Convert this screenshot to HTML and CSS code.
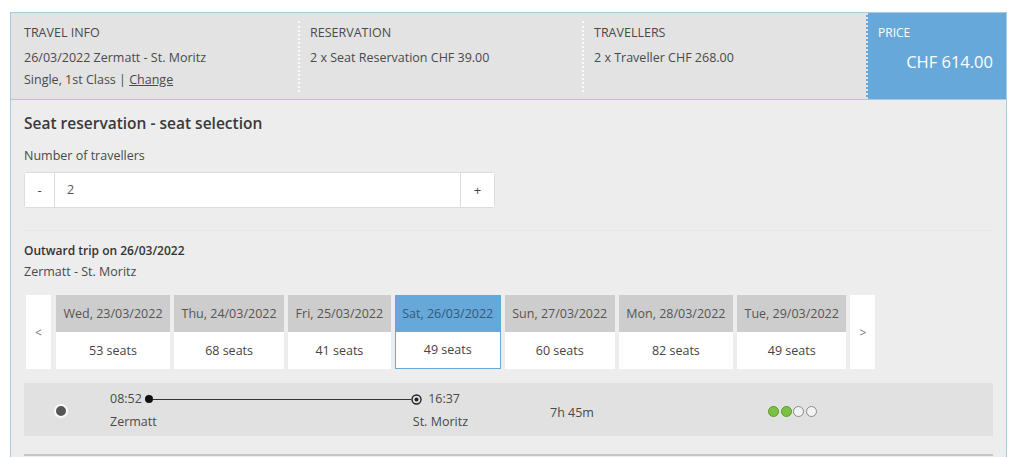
FILE: index.html
```html
<!DOCTYPE html>
<html>
  <head>
    <meta charset="UTF-8" />
    <meta name="viewport" content="width=device-width, initial-scale=1.0" />
    <title>Seat reservation</title>
    <link rel="stylesheet" href="styles.css">
  </head>

  <body>
    <div class="booking">
      <div class="summary">
        <div class="summary-col">
          <div class="summary-label">TRAVEL INFO</div>
          <div class="summary-line">26/03/2022 Zermatt - St. Moritz</div>
          <div class="summary-line">Single, 1st Class | <a href="#" class="change-link">Change</a></div>
        </div>
        <div class="summary-col dotted">
          <div class="summary-label">RESERVATION</div>
          <div class="summary-line">2 x Seat Reservation CHF 39.00</div>
        </div>
        <div class="summary-col dotted">
          <div class="summary-label">TRAVELLERS</div>
          <div class="summary-line">2 x Traveller CHF 268.00</div>
        </div>
        <div class="summary-col price">
          <div class="summary-label">PRICE</div>
          <div class="price-total">CHF 614.00</div>
        </div>
      </div>

      <div class="panel">
        <h2 class="panel-title">Seat reservation - seat selection</h2>
        <div class="field-label">Number of travellers</div>
        <div class="stepper">
          <button class="stepper-btn">-</button>
          <div class="stepper-value">2</div>
          <button class="stepper-btn plus">+</button>
        </div>

        <div class="trip">
          <div class="trip-title">Outward trip on 26/03/2022</div>
          <div class="trip-route">Zermatt - St. Moritz</div>

          <div class="dates">
            <button class="date-arrow">&lt;</button>
            <div class="date-card">
              <div class="date-head">Wed, 23/03/2022</div>
              <div class="date-seats">53 seats</div>
            </div>
            <div class="date-card">
              <div class="date-head">Thu, 24/03/2022</div>
              <div class="date-seats">68 seats</div>
            </div>
            <div class="date-card">
              <div class="date-head">Fri, 25/03/2022</div>
              <div class="date-seats">41 seats</div>
            </div>
            <div class="date-card selected">
              <div class="date-head">Sat, 26/03/2022</div>
              <div class="date-seats">49 seats</div>
            </div>
            <div class="date-card">
              <div class="date-head">Sun, 27/03/2022</div>
              <div class="date-seats">60 seats</div>
            </div>
            <div class="date-card">
              <div class="date-head">Mon, 28/03/2022</div>
              <div class="date-seats">82 seats</div>
            </div>
            <div class="date-card">
              <div class="date-head">Tue, 29/03/2022</div>
              <div class="date-seats">49 seats</div>
            </div>
            <button class="date-arrow">&gt;</button>
          </div>

          <div class="connection">
            <div class="radio-col"><span class="radio-dot"></span></div>
            <div class="route-col">
              <div class="route">
                <div class="route-top">
                  <span>08:52</span>
                  <span class="stop-dot"></span>
                  <span class="route-line"></span>
                  <svg class="stop-target" width="11" height="11" viewBox="0 0 11 11">
                    <circle cx="5.5" cy="5.5" r="4.5" fill="none" stroke="#222" stroke-width="1.4" />
                    <circle cx="5.5" cy="5.5" r="2" fill="#222" />
                  </svg>
                  <span>16:37</span>
                </div>
                <div class="route-bottom">
                  <span>Zermatt</span>
                  <span>St. Moritz</span>
                </div>
              </div>
            </div>
            <div class="duration-col">7h 45m</div>
            <div class="occupancy">
              <span class="occ full"></span>
              <span class="occ full"></span>
              <span class="occ"></span>
              <span class="occ"></span>
            </div>
          </div>

          <div class="connection-next"></div>
        </div>
      </div>
    </div>
  </body>
</html>
```

FILE: styles.css
```css
body {
  margin: 0;
  font-family: "Open Sans", "Liberation Sans", sans-serif;
  font-size: 12.5px;
  color: #4a4a4a;
  background-color: #fff;
}

.booking {
  width: 997px;
  margin: 12px 0 0 10px;
}

/* summary bar */
.summary {
  display: grid;
  grid-template-columns: 287px 284px 284px 1fr;
  height: 86px;
  background-color: #e3e3e3;
  border: 1px solid #a9c9de;
}

.summary-col {
  padding: 9px 12px 0 13px;
}

.summary-col.dotted {
  border-left: 2px dotted #fbfbfb;
  margin: 8px 0 7px;
  padding-top: 1px;
  padding-left: 10px;
}

.summary-label {
  font-size: 12.5px;
  line-height: 22px;
  margin-bottom: 3px;
}

.summary-line {
  line-height: 22px;
}

.change-link {
  color: #4a4a4a;
}

.summary-col.price {
  background-color: #66a8d9;
  color: #fff;
  border-left: 2px dotted #d7e7f3;
  padding-left: 10px;
  padding-right: 13px;
}

.price .summary-label {
  font-size: 12px;
}

.price-total {
  text-align: right;
  font-size: 16.5px;
  line-height: 24px;
  margin-top: 6px;
}

/* main panel */
.panel {
  background-color: #ededed;
  border-left: 1px solid #a9c9de;
  border-right: 1px solid #a9c9de;
  padding: 12px 13px 0;
  height: 358px;
}

.panel-title {
  margin: 0 0 11px;
  font-size: 15.5px;
  font-weight: 600;
  line-height: 22px;
  color: #3a3a3a;
}

.field-label {
  line-height: 20px;
  margin-bottom: 6px;
  padding-top: 1px;
}

.stepper {
  display: flex;
  width: 469px;
  height: 34px;
  background-color: #fff;
  border: 1px solid #dcdcdc;
  border-radius: 3px;
}

.stepper-btn {
  width: 29px;
  border: none;
  background-color: #fff;
  font-family: inherit;
  font-size: 13px;
  color: #444;
  padding: 0;
}

.stepper-btn.plus {
  width: 34px;
  border-left: 1px solid #dcdcdc;
}

.stepper-value {
  flex: 1;
  border-left: 1px solid #dcdcdc;
  padding-left: 12px;
  line-height: 33px;
  color: #555;
}

/* trip */
.trip {
  margin-top: 22px;
  border-top: 1px solid #e6e6e6;
  padding-top: 10px;
}

.trip-title {
  font-weight: 600;
  color: #333;
  line-height: 20px;
  font-size: 12px;
}

.trip-route {
  line-height: 22px;
  margin-bottom: 12px;
}

.dates {
  display: flex;
  gap: 4px;
  margin-left: 2px;
}

.date-arrow {
  width: 25px;
  border: none;
  background-color: #fff;
  color: #777;
  font-family: inherit;
  font-size: 12px;
  padding: 0;
}

.date-arrow:first-child {
  margin-right: 1px;
}

.date-card {
  display: flex;
  flex-direction: column;
}

.date-head {
  background-color: #cdcdcd;
  height: 37px;
  line-height: 37px;
  padding: 0 7.5px;
  color: #555;
  white-space: nowrap;
}

.date-seats {
  background-color: #fff;
  height: 37px;
  line-height: 37px;
  text-align: center;
  color: #444;
}

.date-card.selected .date-head {
  background-color: #66a8d9;
  color: #34597b;
}

.date-card.selected .date-seats {
  border: 1px solid #66a8d9;
  border-top: none;
  height: 36px;
  line-height: 35px;
}

/* connection row */
.connection {
  display: grid;
  grid-template-columns: 86px 440px 218px 1fr;
  align-items: center;
  background-color: #e1e1e1;
  margin-top: 14px;
  padding: 6px 0 4px;
}

.radio-col {
  padding-left: 30px;
  display: flex;
}

.radio-dot {
  width: 10px;
  height: 10px;
  border-radius: 50%;
  background-color: #555;
  border: 2px solid #fafafa;
}

.route {
  width: 358px;
}

.route-top,
.route-bottom {
  display: flex;
  align-items: center;
  line-height: 20px;
}

.route-top {
  padding-right: 8px;
}

.route-bottom {
  justify-content: space-between;
  margin-top: 3px;
}

.stop-dot {
  width: 8px;
  height: 8px;
  border-radius: 50%;
  background-color: #111;
  margin-left: 3px;
}

.route-line {
  flex: 1;
  height: 1px;
  background-color: #333;
}

.stop-target {
  margin-right: 6px;
}

.duration-col {
  padding-top: 3px;
}

.occupancy {
  display: flex;
  gap: 1.5px;
  padding-top: 1px;
}

.occ {
  width: 9px;
  height: 9px;
  border-radius: 50%;
  border: 1px solid #8a8a8a;
  background-color: #f2f2f2;
}

.occ.full {
  background-color: #7cc142;
  border-color: #5b9a2c;
}

.connection-next {
  margin-top: 18px;
  border-top: 2px solid #c6c6c6;
}
```
